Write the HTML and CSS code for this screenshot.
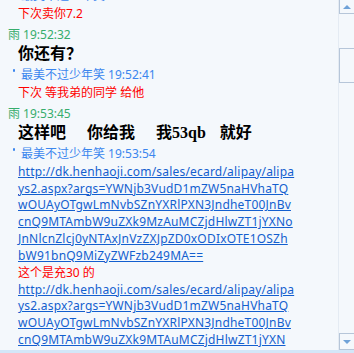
FILE: index.html
```html
<!DOCTYPE html>
<html lang="zh-CN">
<head>
    <meta charset="UTF-8">
    <title>聊天记录</title>
    <link rel="stylesheet" href="styles.css">
</head>
<body>
    <div class="window">
        <div class="main">
            <div class="chat">
                <div class="messages">
                    <div class="msg">
                        <div class="head head-other"><span class="mark"></span>最美不过少年笑 19:52:15</div>
                        <div class="text red">下次卖你7.2</div>
                    </div>
                    <div class="msg">
                        <div class="head head-me">雨 19:52:32</div>
                        <div class="text bold">你还有？</div>
                    </div>
                    <div class="msg">
                        <div class="head head-other"><span class="mark"></span>最美不过少年笑 19:52:41</div>
                        <div class="text red">下次 等我弟的同学 给他</div>
                    </div>
                    <div class="msg">
                        <div class="head head-me">雨 19:53:45</div>
                        <div class="text bold">这样吧   你给我   我53qb  就好</div>
                    </div>
                    <div class="msg">
                        <div class="head head-other"><span class="mark"></span>最美不过少年笑 19:53:54</div>
                        <div class="text">
                            <a class="link" href="#">http://dk.henhaoji.com/sales/ecard/alipay/alipa<br>ys2.aspx?args=YWNjb3VudD1mZW5naHVhaTQ<br>wOUAyOTgwLmNvbSZnYXRlPXN3JndheT00JnBv<br>cnQ9MTAmbW9uZXk9MzAuMCZjdHlwZT1jYXNo<br>JnNlcnZlcj0yNTAxJnVzZXJpZD0xODIxOTE1OSZh<br>bW91bnQ9MiZyZWFzb249MA==</a>
                            <div class="red">这个是充30 的</div>
                            <a class="link" href="#">http://dk.henhaoji.com/sales/ecard/alipay/alipa<br>ys2.aspx?args=YWNjb3VudD1mZW5naHVhaTQ<br>wOUAyOTgwLmNvbSZnYXRlPXN3JndheT00JnBv<br>cnQ9MTAmbW9uZXk9MTAuMCZjdHlwZT1jYXN</a>
                        </div>
                    </div>
                </div>
            </div>
            <div class="scrollbar">
                <div class="sb-btn sb-up"><span class="arrow-up"></span></div>
                <div class="sb-thumb"></div>
                <div class="sb-btn sb-down"><span class="arrow-down"></span></div>
            </div>
        </div>
    </div>
</body>
</html>
```

FILE: styles.css
```css
body {
    margin: 0;
    padding: 0;
    width: 354px;
    height: 353px;
    overflow: hidden;
    background-color: #f4f8fc;
    font-family: "Noto Sans", "Noto Sans CJK SC", sans-serif;
    font-size: 12px;
}

.window {
    display: flex;
    flex-direction: column;
    height: 353px;
}

.main {
    display: flex;
    height: 350px;
    border-bottom: 3px solid #d3e6f8;
}

.chat {
    flex: 1;
    overflow: hidden;
    padding-left: 8px;
}

.messages {
    margin-top: -14px;
}

.msg {
    margin-bottom: 2.5px;
}

.head {
    height: 20px;
    line-height: 20px;
    white-space: nowrap;
}

.head-me {
    color: #36ad6c;
}

.head-other {
    color: #3b86ee;
    padding-left: 5px;
}

.mark {
    display: inline-block;
    width: 2px;
    height: 3px;
    margin-top: 4px;
    margin-right: 6px;
    vertical-align: top;
    background: #3b86ee;
    border-radius: 1px;
}

.text {
    padding-left: 10px;
    line-height: 16.85px;
    color: #000000;
    white-space: nowrap;
}

.red {
    color: #ff0000;
}

.bold {
    font-family: "Liberation Serif", "Noto Sans CJK SC", serif;
    font-size: 16px;
    font-weight: bold;
    line-height: 16px;
    padding-top: 1px;
    white-space: pre;
    word-spacing: 3px;
}

.link {
    display: block;
    color: #135fcf;
    letter-spacing: 0.2px;
    text-decoration: underline;
}

.scrollbar {
    width: 15px;
    border-left: 1px solid #e4ebf3;
    display: flex;
    flex-direction: column;
}

.sb-btn {
    display: flex;
    align-items: center;
    justify-content: center;
    border: 1px solid #b6c6d9;
    border-right: none;
    background: #f4f8fc;
}

.sb-up {
    height: 13px;
    margin-top: -1px;
}

.sb-down {
    height: 15px;
    margin-top: auto;
    margin-bottom: 0;
}

.sb-thumb {
    height: 33px;
    margin-top: 34px;
    border: 1px solid #b6c6d9;
    border-right: none;
}

.arrow-up {
    width: 0;
    height: 0;
    border-left: 4px solid transparent;
    border-right: 4px solid transparent;
    border-bottom: 4px solid #6fa2d8;
}

.arrow-down {
    width: 0;
    height: 0;
    border-left: 4px solid transparent;
    border-right: 4px solid transparent;
    border-top: 4px solid #6fa2d8;
}
```
